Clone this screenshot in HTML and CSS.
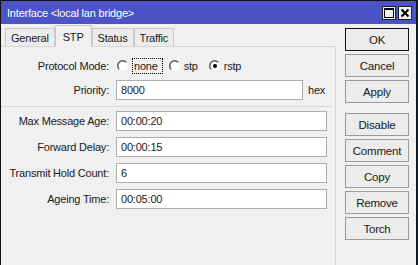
FILE: index.html
```html
<!DOCTYPE html>
<html lang="en">
<head>
  <meta charset="UTF-8" />
  <title>Interface &lt;local lan bridge&gt;</title>
  <link rel="stylesheet" href="styles.css">
</head>
<body>
  <div class="window">
    <div class="titlebar">
      <span class="title">Interface &lt;local lan bridge&gt;</span>
      <div class="win-buttons">
        <span class="win-btn">
          <svg width="10" height="10" viewBox="0 0 10 10"><rect x="0.5" y="0.5" width="9" height="9" fill="none" stroke="#000"/><rect x="0" y="0" width="10" height="2" fill="#000"/></svg>
        </span>
        <span class="win-btn">
          <svg width="10" height="10" viewBox="0 0 10 10"><path d="M1.5 1.5 L8.5 8.5 M8.5 1.5 L1.5 8.5" stroke="#000" stroke-width="2"/></svg>
        </span>
      </div>
    </div>

    <div class="content">
      <div class="main">
        <div class="tabs">
          <span class="tab">General</span>
          <span class="tab active">STP</span>
          <span class="tab">Status</span>
          <span class="tab">Traffic</span>
        </div>

        <div class="panel">
          <div class="row">
            <span class="label">Protocol Mode:</span>
            <div class="radios">
              <span class="radio">
                <svg width="12" height="12" viewBox="0 0 12 12"><circle cx="6" cy="6" r="5" fill="#fff"/><path d="M2.2 9.3 A5 5 0 0 1 9.3 2.2" fill="none" stroke="#555" stroke-width="1.4"/></svg>
                <span class="focus">none</span>
              </span>
              <span class="radio">
                <svg width="12" height="12" viewBox="0 0 12 12"><circle cx="6" cy="6" r="5" fill="#fff"/><path d="M2.2 9.3 A5 5 0 0 1 9.3 2.2" fill="none" stroke="#555" stroke-width="1.4"/></svg>
                <span>stp</span>
              </span>
              <span class="radio">
                <svg width="12" height="12" viewBox="0 0 12 12"><circle cx="6" cy="6" r="5" fill="#fff"/><path d="M2.2 9.3 A5 5 0 0 1 9.3 2.2" fill="none" stroke="#555" stroke-width="1.4"/><circle cx="6" cy="6" r="2" fill="#000"/></svg>
                <span>rstp</span>
              </span>
            </div>
          </div>

          <div class="row">
            <span class="label">Priority:</span>
            <span class="field short">8000</span>
            <span class="unit">hex</span>
          </div>

          <div class="divider"></div>

          <div class="row">
            <span class="label">Max Message Age:</span>
            <span class="field">00:00:20</span>
          </div>
          <div class="row">
            <span class="label">Forward Delay:</span>
            <span class="field">00:00:15</span>
          </div>
          <div class="row">
            <span class="label">Transmit Hold Count:</span>
            <span class="field">6</span>
          </div>
          <div class="row">
            <span class="label">Ageing Time:</span>
            <span class="field">00:05:00</span>
          </div>
        </div>
      </div>

      <div class="side">
        <button class="btn default">OK</button>
        <button class="btn">Cancel</button>
        <button class="btn">Apply</button>
        <button class="btn spaced">Disable</button>
        <button class="btn">Comment</button>
        <button class="btn">Copy</button>
        <button class="btn">Remove</button>
        <button class="btn">Torch</button>
      </div>
    </div>
  </div>
</body>
</html>
```

FILE: styles.css
```css
* { margin: 0; padding: 0; box-sizing: border-box; }

body {
  background: #1d2640;
  width: 418px; height: 265px; overflow: hidden;
  font-family: "Liberation Sans", Arial, sans-serif;
  font-size: 11px;
  letter-spacing: -0.2px;
  color: #1a1a1a;
  white-space: nowrap;
}

.window {
  width: 417px; height: 265px;
  background: #f0f0f0;
  border: 1px solid #111;
  border-bottom: none;
  display: flex; flex-direction: column;
}

/* title bar */
.titlebar {
  height: 23px; flex: none;
  background: #4b53c6;
  display: flex; align-items: center; justify-content: space-between;
  padding: 0 4px 0 6px;
}
.title { color: #fff; font-size: 11px; letter-spacing: -0.2px; }

.win-buttons { display: flex; gap: 2px; }
.win-btn {
  width: 14px; height: 14px;
  background: #f0f0f0; border: 1px solid #222;
  display: flex; align-items: center; justify-content: center;
}

/* body */
.content { flex: 1; display: flex; }

.main {
  width: 335px;
  display: flex; flex-direction: column;
}

.tabs {
  height: 22px; flex: none;
  display: flex; align-items: flex-end;
  padding-left: 4px;
}
.tab {
  height: 18px; padding: 0 5px;
  border: 1px solid #c9c9c9; border-bottom: none;
  background: #ececec;
  display: flex; align-items: center;
}
.tab.active {
  height: 22px; margin-bottom: -1px;
  background: #f0f0f0;
  padding: 0 7px;
  position: relative; z-index: 1;
}

.panel {
  flex: 1;
  border-top: 1px solid #d6d6d6;
  border-right: 1px solid #d6d6d6;
  padding-top: 9px;
}

.row {
  height: 20px; margin-bottom: 6px;
  display: flex; align-items: center;
}
.row:first-child { margin-bottom: 4px; }

.label {
  width: 109px; padding-right: 1px;
  text-align: right;
}

.radios { display: flex; align-items: center; margin-left: 7px; }
.radio { display: flex; align-items: center; gap: 3px; margin-right: 11px; }
.radio:first-child { margin-right: 6px; }
.radio svg { flex: none; }
.focus { border: 1px dotted #000; padding: 1px 4px 1px 1px; }

.field {
  margin-left: 6px;
  width: 211px; height: 20px;
  background: #fff;
  border: 1px solid #adadad;
  padding-left: 4px;
  display: flex; align-items: center;
}
.field.short { width: 187px; }
.unit { margin-left: 5px; }

.divider {
  height: 1px; background: #d6d6d6;
  margin: 0 4px 4px 0;
}

/* buttons column */
.side {
  flex: 1;
  display: flex; flex-direction: column; gap: 3px;
  padding: 4px 0 0 9px;
}
.btn {
  width: 64px; height: 23px;
  background: #ececec;
  border: 1px solid #9a9a9a;
  font-family: inherit; font-size: 11.5px; letter-spacing: -0.2px; color: #1a1a1a;
}
.btn.default { border-color: #111; }
.btn.spaced { margin-top: 7px; }
```
